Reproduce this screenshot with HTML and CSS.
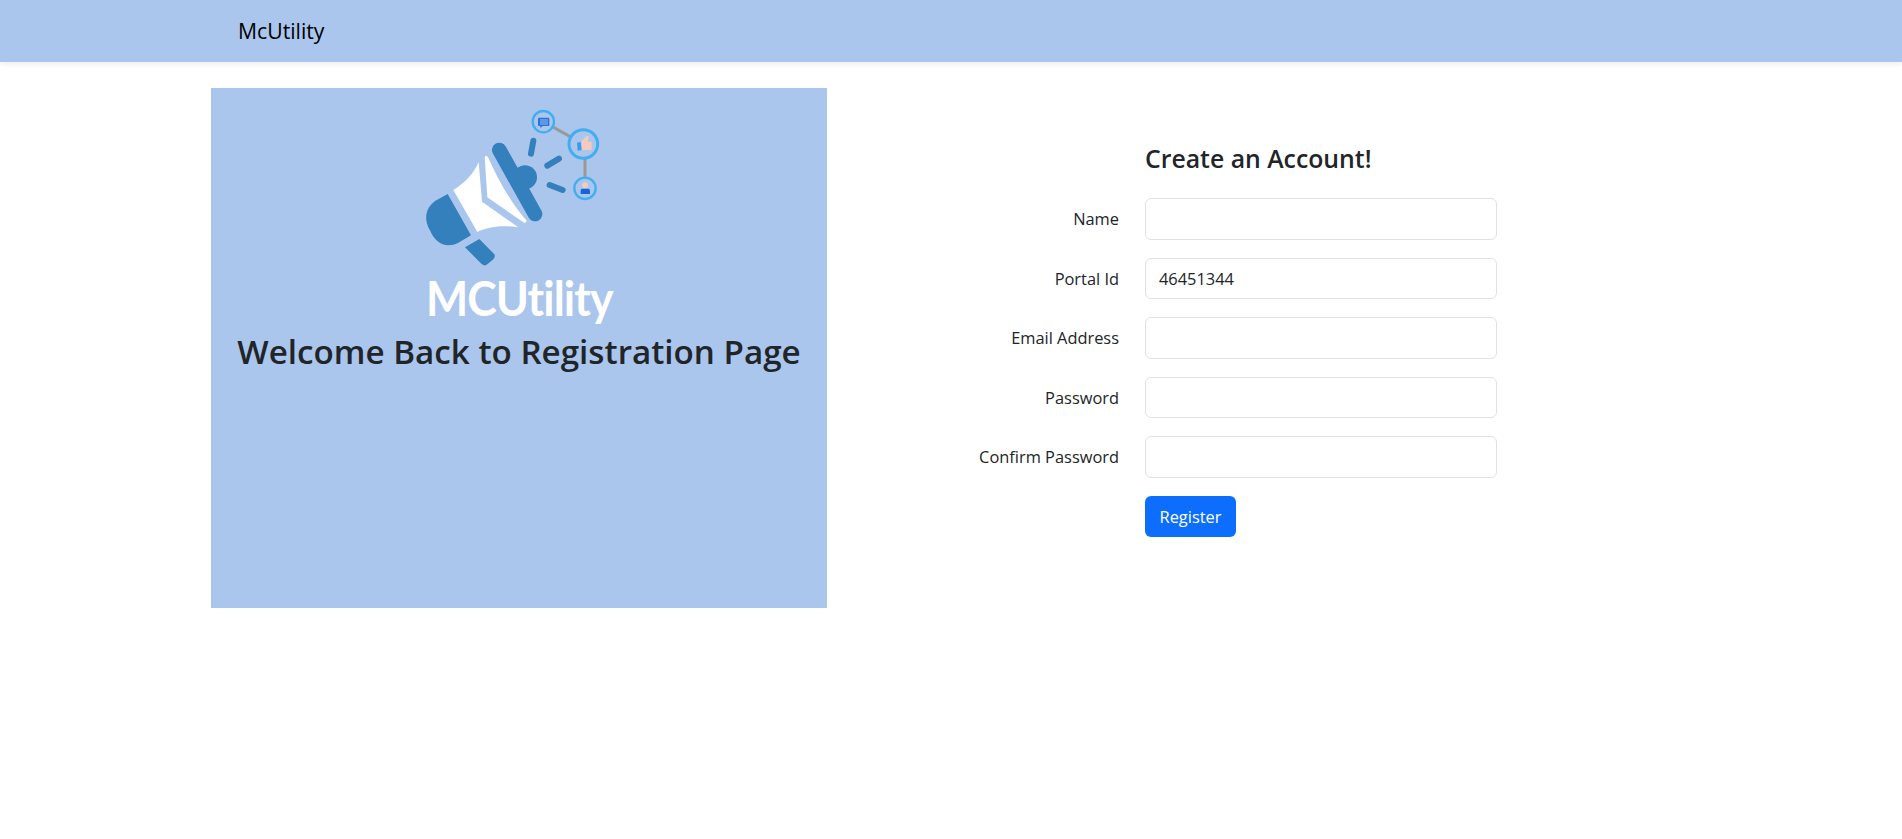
FILE: index.html
```html
<!DOCTYPE html>
<html lang="en">
<head>
<meta charset="utf-8">
<title>McUtility</title>
<link rel="stylesheet" href="styles.css">
</head>
<body>
<nav class="navbar"><a class="brand" href="#">McUtility</a></nav>
<main class="page">
  <section class="welcome">
    <svg class="logo" viewBox="-3 -6 720 555" xmlns="http://www.w3.org/2000/svg" aria-hidden="true">
      <g stroke="#999" stroke-width="9"><line x1="430" y1="95" x2="550" y2="162"/><line x1="555" y1="162" x2="555" y2="295"/></g>
      <g fill="#aac6ec" stroke="#42aef0"><circle cx="430" cy="95" r="32" stroke-width="7"/><circle cx="550" cy="162" r="43" stroke-width="9"/><circle cx="555" cy="295" r="32" stroke-width="7"/></g>
      <path fill="#2a72d8" d="M417 83h28q3 0 3 3v19q0 3-3 3h-17l-7 6v-6h-4q-3 0-3-3V86q0-3 3-3z"/>
      <path stroke="#a9cdf2" stroke-width="2.5" d="M420 90h24M420 96h24M420 102h24"/>
      <path fill="#f6cbbd" d="M545 153l15-14q5-3 6 3l-3 13h9q3 0 3 4v17q0 4-4 4h-26z"/>
      <path fill="#3a9be6" d="M531 158l11-2 3 24-12 2z"/>
      <circle cx="555" cy="286" r="9" fill="#f6cbbd"/>
      <path fill="#1565d8" d="M546 296h18q6 0 6 6v10h-28v-10q0-6 4-6z"/>
      <g stroke="#3380bc" stroke-linecap="round" fill="none">
        <line x1="298" y1="180" x2="405" y2="372" stroke-width="44"/>
        <line x1="400" y1="152" x2="393" y2="191" stroke-width="18"/>
        <line x1="477" y1="206" x2="442" y2="227" stroke-width="18"/>
        <line x1="449" y1="285" x2="488" y2="300" stroke-width="18"/>
      </g>
      <circle cx="375" cy="262" r="36" fill="#3380bc"/>
      <path fill="#3380bc" d="M143 312L213 436 175 458C135 478 105 455 92 425 70 390 75 355 105 333Z"/>
      <path fill="#3380bc" d="M238 447L283 493Q287 500 280 508L262 523Q254 530 245 522L195 472Z"/>
      <path fill="#fff" d="M160 300C195 278 222 250 236 216L246 335 355 412C310 405 265 410 232 426Z"/>
      <path fill="#fff" d="M254 200Q258 193 265 203C290 260 330 335 380 392 377 400 373 399 370 397L262 322Z"/>
    </svg>
    <div class="logo-text">MCUtility</div>
    <h1 class="welcome-title">Welcome Back to Registration Page</h1>
  </section>
  <section class="account">
    <form class="form">
      <h2 class="form-title">Create an Account!</h2>
      <label class="label" for="name">Name</label>
      <input class="input" id="name" type="text">
      <label class="label" for="portal">Portal Id</label>
      <input class="input" id="portal" type="text" value="46451344">
      <label class="label" for="email">Email Address</label>
      <input class="input" id="email" type="email">
      <label class="label" for="pass">Password</label>
      <input class="input" id="pass" type="password">
      <label class="label" for="confirm">Confirm Password</label>
      <input class="input" id="confirm" type="password">
      <button class="button" type="button">Register</button>
    </form>
  </section>
</main>
</body>
</html>
```
FILE: styles.css
```css
* { box-sizing: border-box; }
html, body { margin: 0; padding: 0; }
body {
  background: #fff;
  color: #212529;
  font-family: "Open Sans", "Noto Sans", sans-serif;
  font-size: 16.4px;
  min-height: 839px;
}
.navbar {
  height: 62px;
  background: #aac6ec;
  display: flex;
  align-items: center;
  padding-left: 238px;
  box-shadow: 0 2px 6px rgba(0, 0, 0, .08);
}
.brand {
  color: #000;
  font-size: 21.2px;
  text-decoration: none;
  line-height: 1;
}
.page {
  display: flex;
  margin: 26px 0 0 211px;
}
.welcome {
  width: 616px;
  height: 520px;
  background: #aac6ec;
  display: flex;
  flex-direction: column;
  align-items: center;
  flex: none;
}
.logo { width: 240px; height: 185px; display: block; flex: none; }
.logo-text {
  color: #fff;
  font-family: Lato, "Open Sans", sans-serif;
  font-weight: 700;
  font-size: 48px;
  line-height: 50px;
  letter-spacing: -1px;
  white-space: nowrap;
  transform: scaleX(.93);
}
.welcome-title {
  margin: 7px 0 0;
  font-size: 33.2px;
  font-weight: 600;
  line-height: 44px;
  white-space: nowrap;
}
.account { margin-left: 146px; padding-top: 53px; }
.form {
  display: grid;
  grid-template-columns: 146px 352px;
  column-gap: 26px;
  row-gap: 18px;
  align-items: center;
}
.form-title {
  grid-column: 2;
  margin: 0 0 5px;
  font-size: 24.8px;
  font-weight: 600;
  line-height: 34px;
}
.label { text-align: right; white-space: nowrap; }
.input {
  grid-column: 2;
  height: 41.5px;
  border: 1px solid #dee2e6;
  border-radius: 6px;
  padding: 0 13px;
  font: inherit;
  color: #212529;
  background: #fff;
  outline: 0;
}
.button {
  grid-column: 2;
  justify-self: start;
  width: 91px;
  height: 41.5px;
  background: #0d6efd;
  color: #fff;
  border: 0;
  border-radius: 6px;
  font: inherit;
  cursor: pointer;
}
```
